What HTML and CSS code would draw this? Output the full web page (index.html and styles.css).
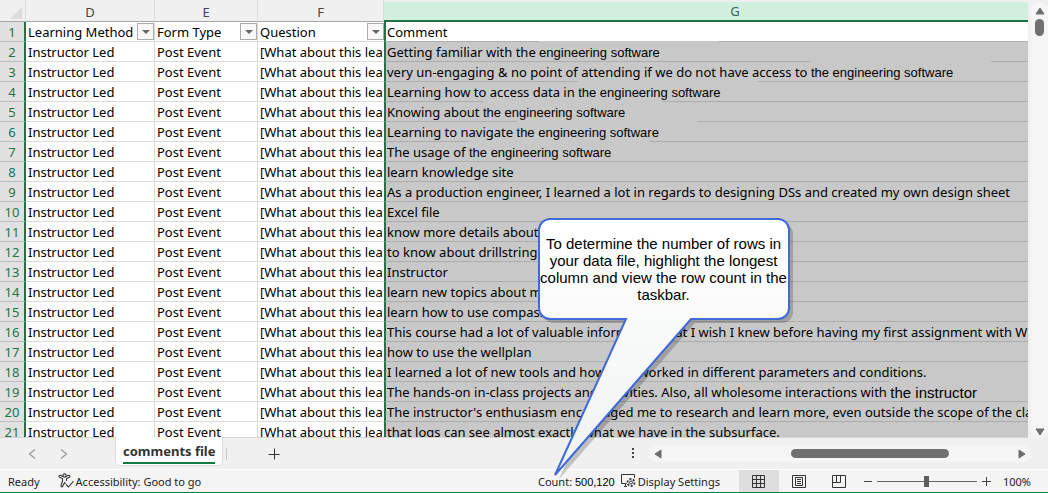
FILE: index.html
```html
<!DOCTYPE html>
<html lang="en">
<head>
    <meta charset="UTF-8">
    <meta name="viewport" content="width=device-width, initial-scale=1.0">
    <title>comments file</title>
    <link rel="stylesheet" href="styles.css">
</head>
<body>
    <div class="workspace">
        <div class="sheet">
            <table class="grid">
                <colgroup>
                    <col class="col-num">
                    <col class="col-d">
                    <col class="col-e">
                    <col class="col-f">
                    <col class="col-g">
                </colgroup>
                <thead>
                    <tr>
                        <th class="corner"><svg width="12" height="12" viewBox="0 0 12 12"><path d="M12 0V12H0z" fill="#dcdcdc"/></svg></th>
                        <th>D</th>
                        <th>E</th>
                        <th>F</th>
                        <th class="selected">G</th>
                    </tr>
                </thead>
                <tbody>
                    <tr class="titles">
                        <th>1</th>
                        <td><div class="title">Learning Method<button class="filter" aria-label="Filter Learning Method"></button></div></td>
                        <td><div class="title">Form Type<button class="filter" aria-label="Filter Form Type"></button></div></td>
                        <td><div class="title">Question<button class="filter" aria-label="Filter Question"></button></div></td>
                        <td>Comment</td>
                    </tr>
                    <tr><th>2</th><td>Instructor Led</td><td>Post Event</td><td>[What about this lea</td><td>Getting familiar with the <span class="patch">engineering software</span></td></tr>
                    <tr><th>3</th><td>Instructor Led</td><td>Post Event</td><td>[What about this lea</td><td>very un-engaging &amp; no point of attending if we do not have access to <span class="patch">the engineering software</span></td></tr>
                    <tr><th>4</th><td>Instructor Led</td><td>Post Event</td><td>[What about this lea</td><td>Learning how to access data in <span class="patch">the engineering software</span></td></tr>
                    <tr><th>5</th><td>Instructor Led</td><td>Post Event</td><td>[What about this lea</td><td>Knowing about <span class="patch">the engineering software</span></td></tr>
                    <tr><th>6</th><td>Instructor Led</td><td>Post Event</td><td>[What about this lea</td><td>Learning to navigate <span class="patch">the engineering software</span></td></tr>
                    <tr><th>7</th><td>Instructor Led</td><td>Post Event</td><td>[What about this lea</td><td>The usage of <span class="patch">the engineering software</span></td></tr>
                    <tr><th>8</th><td>Instructor Led</td><td>Post Event</td><td>[What about this lea</td><td>learn knowledge site</td></tr>
                    <tr><th>9</th><td>Instructor Led</td><td>Post Event</td><td>[What about this lea</td><td>As a production engineer, I learned a lot in regards to designing DSs and created my own design sheet</td></tr>
                    <tr><th>10</th><td>Instructor Led</td><td>Post Event</td><td>[What about this lea</td><td>Excel file</td></tr>
                    <tr><th>11</th><td>Instructor Led</td><td>Post Event</td><td>[What about this lea</td><td>know more details about</td></tr>
                    <tr><th>12</th><td>Instructor Led</td><td>Post Event</td><td>[What about this lea</td><td>to know about drillstring</td></tr>
                    <tr><th>13</th><td>Instructor Led</td><td>Post Event</td><td>[What about this lea</td><td>Instructor</td></tr>
                    <tr><th>14</th><td>Instructor Led</td><td>Post Event</td><td>[What about this lea</td><td>learn new topics about m</td></tr>
                    <tr><th>15</th><td>Instructor Led</td><td>Post Event</td><td>[What about this lea</td><td>learn how to use compass</td></tr>
                    <tr><th>16</th><td>Instructor Led</td><td>Post Event</td><td>[What about this lea</td><td>This course had a lot of valuable information that I wish I knew before having my first assignment with W</td></tr>
                    <tr><th>17</th><td>Instructor Led</td><td>Post Event</td><td>[What about this lea</td><td>how to use the wellplan</td></tr>
                    <tr><th>18</th><td>Instructor Led</td><td>Post Event</td><td>[What about this lea</td><td>I learned a lot of new tools and how they worked in different parameters and conditions.</td></tr>
                    <tr><th>19</th><td>Instructor Led</td><td>Post Event</td><td>[What about this lea</td><td>The hands-on in-class projects and activities. Also, all wholesome interactions with <span class="patch large">the instructor</span></td></tr>
                    <tr><th>20</th><td>Instructor Led</td><td>Post Event</td><td>[What about this lea</td><td>The instructor's enthusiasm encouraged me to research and learn more, even outside the scope of the class</td></tr>
                    <tr><th>21</th><td>Instructor Led</td><td>Post Event</td><td>[What about this lea</td><td>that logs can see almost exactly what we have in the subsurface.</td></tr>
                </tbody>
            </table>
        </div>
        <div class="vscroll">
            <svg width="10" height="8" viewBox="0 0 10 8"><path d="M5 1L9 7H1z" fill="#6e6e6e" stroke="#6e6e6e" stroke-linejoin="round"/></svg>
            <div class="vthumb"></div>
            <svg class="down" width="10" height="8" viewBox="0 0 10 8"><path d="M5 7L9 1H1z" fill="#6e6e6e" stroke="#6e6e6e" stroke-linejoin="round"/></svg>
        </div>
    </div>

    <div class="tabbar">
        <button class="nav" aria-label="Previous sheet"><svg width="8" height="12" viewBox="0 0 8 12"><path d="M7 1.500L1.500 6L7 10.500" fill="none" stroke="#999" stroke-width="1.300"/></svg></button>
        <button class="nav" aria-label="Next sheet"><svg width="8" height="12" viewBox="0 0 8 12"><path d="M1 1.500L6.500 6L1 10.500" fill="none" stroke="#999" stroke-width="1.300"/></svg></button>
        <button class="tab"><span>comments file</span></button>
        <button class="add" aria-label="New sheet"><svg width="12" height="12" viewBox="0 0 12 12"><path d="M6.500 0.500V11.500M0.500 6.500H11.500" stroke="#333"/></svg></button>
        <svg class="dots" width="3" height="12" viewBox="0 0 3 12"><path d="M0 0h2v2H0zM0 4h2v2H0zM0 8h2v2H0z" fill="#444"/></svg>
        <div class="hscroll">
            <svg width="8" height="10" viewBox="0 0 8 10"><path d="M1 5L7 1V9z" fill="#6e6e6e" stroke="#6e6e6e" stroke-linejoin="round"/></svg>
            <div class="hthumb"></div>
            <svg width="8" height="10" viewBox="0 0 8 10"><path d="M7 5L1 1V9z" fill="#6e6e6e" stroke="#6e6e6e" stroke-linejoin="round"/></svg>
        </div>
    </div>

    <div class="statusbar">
        <span class="ready">Ready</span>
        <button class="status-item access">
            <svg width="16" height="16" viewBox="0 0 16 16" fill="none" stroke="#333" stroke-width="1.100"><circle cx="6.500" cy="2.500" r="1.600"/><path d="M5 3.500L2.500 2.300C1 1.800 0.500 3.600 1.700 4.200L4.500 5.500V8L3 12.500C2.700 14 4.300 14.300 4.700 13.200L6.500 9.500L7.500 11M8 3.500L10.500 2.300C12 1.800 12.500 3.600 11.300 4.200L8.500 5.500V8M8 11.500L10.500 14L15.500 8"/></svg>
            Accessibility: Good to go
        </button>
        <span class="count">Count: <span class="total">500,120</span></span>
        <button class="status-item display">
            <svg width="15" height="14" viewBox="0 0 15 14" fill="none" stroke="#333"><path d="M5.500 9.500H0.500V0.500H13.500V4M3 12.500H6M4.500 9.500V12.500"/><circle cx="10" cy="8.500" r="1.500"/><circle cx="10" cy="8.500" r="3.500" stroke-width="1.800" stroke-dasharray="2 1.600"/></svg>
            Display Settings
        </button>
        <button class="view active" aria-label="Normal view"><svg width="13" height="13" viewBox="0 0 13 13"><path d="M0.500 0.500H12.500V12.500H0.500zM4.500 0.500V12.500M8.500 0.500V12.500M0.500 4.500H12.500M0.500 8.500H12.500" fill="none" stroke="#333"/></svg></button>
        <button class="view" aria-label="Page layout"><svg width="14" height="13" viewBox="0 0 14 13"><path d="M0.500 0.500H13.500V12.500H0.500zM3.500 2.500H10.500V10.500H3.500zM5 4.500H9M5 6.500H9M5 8.500H9" fill="none" stroke="#333"/></svg></button>
        <button class="view" aria-label="Page break preview"><svg width="14" height="13" viewBox="0 0 14 13"><path d="M0.500 0.500H13.500V12.500H0.500zM4.500 0.500V7.500M0.500 7.500H8.500V0.500" fill="none" stroke="#333"/></svg></button>
        <button class="zoom-btn" aria-label="Zoom out"><svg width="8" height="9" viewBox="0 0 8 9"><path d="M0 4.500H8" stroke="#444"/></svg></button>
        <input class="zoom" type="range" min="0" max="100" value="50" aria-label="Zoom">
        <button class="zoom-btn" aria-label="Zoom in"><svg width="9" height="9" viewBox="0 0 9 9"><path d="M0 4.500H9M4.500 0V9" stroke="#444"/></svg></button>
        <span class="percent">100%</span>
    </div>

    <div class="callout">
        <svg width="260" height="264" viewBox="0 0 260 264">
            <path d="M13 2H241A11 11 0 0 1 252 13V91A11 11 0 0 1 241 102H154L18 258L89 102H13A11 11 0 0 1 2 91V13A11 11 0 0 1 13 2z" fill="#000" fill-opacity="0.200" transform="translate(4 3)"/>
            <path d="M13 1H241A11 11 0 0 1 252 12V90A11 11 0 0 1 241 101H154L18 257L89 101H13A11 11 0 0 1 2 90V12A11 11 0 0 1 13 1z" fill="url(#paper)" stroke="#4169d8" stroke-width="2"/>
            <defs><linearGradient id="paper" x1="0" y1="0" x2="0" y2="1"><stop offset="0" stop-color="#fff"/><stop offset="1" stop-color="#f0f2f2"/></linearGradient></defs>
        </svg>
        <p>To determine the number of rows in your data file, highlight the longest column and view the row count in the taskbar.</p>
    </div>
</body>
</html>
```
FILE: styles.css
```css
* {
    box-sizing: border-box;
}
body {
    margin: 0;
    height: 100vh;
    display: flex;
    flex-direction: column;
    overflow: hidden;
    background-color: #f0f0f0;
    font-family: "Noto Sans", sans-serif;
    font-size: 13px;
    color: #000;
    position: relative;
}
button {
    padding: 0;
    border: none;
    background: none;
    font: inherit;
    color: inherit;
}
svg {
    display: block;
    flex: none;
}

/* grid */
.workspace {
    flex: 1;
    min-height: 0;
    display: flex;
}
.sheet {
    flex: 1;
    min-width: 0;
    overflow: hidden;
    border-bottom: 1px solid #d4d4d4;
}
.grid {
    table-layout: fixed;
    width: calc(100% + 59px);
    border-spacing: 0;
    background-color: #fff;
}
.col-num {
    width: 26px;
}
.col-d {
    width: 129px;
}
.col-e {
    width: 103px;
}
.col-f {
    width: 126px;
}
.grid th {
    font-weight: normal;
    padding: 2px 0 0;
    height: 20px;
    line-height: 17px;
}
.grid thead th {
    height: 22px;
    padding-top: 4px;
    background-color: #f0f0f0;
    border-right: 1px solid #dcdcdc;
    border-bottom: 1px solid #a6a6a6;
    color: #444;
}
.grid thead .corner svg {
    margin-left: 10px;
}
.grid thead .selected {
    background-color: #d2f0e0;
    border-top: 2px solid #f0f0f0;
    border-bottom: 2px solid #217346;
    padding-top: 1px;
    color: #2f6b4c;
}
.grid tbody th {
    background-color: #e1e1e1;
    border-right: 2px solid #217346;
    border-bottom: 1px solid #bcbcbc;
    color: #217346;
}
.grid td {
    height: 20px;
    line-height: 17px;
    padding: 2px 0 0 2px;
    border-right: 1px solid #dcdcdc;
    border-bottom: 1px solid #dcdcdc;
    white-space: nowrap;
    overflow: hidden;
}
.grid td:nth-child(4) {
    border-right: none;
}
.grid td:last-child {
    background-color: #c8c8c8;
    border-left: 2px solid #217346;
    border-bottom-color: #adadad;
    padding-left: 1px;
    overflow: visible;
}
.grid .titles td:last-child {
    background-color: #fff;
}
.title {
    display: flex;
    justify-content: space-between;
    height: 17px;
}
.filter {
    width: 17px;
    height: 17px;
    margin-top: -1px;
    border: 1px solid #ababab;
    background-color: #f8f8f8;
    display: flex;
    align-items: center;
    justify-content: center;
}
.filter::after {
    content: "";
    border: 4px solid transparent;
    border-top-color: #666;
    border-bottom: none;
}
.patch {
    display: inline-block;
    width: 180px;
    height: 20px;
    margin-top: -3px;
    vertical-align: top;
    line-height: 23px;
    background-color: #c8c8c8;
    font-family: "Liberation Sans", Arial, sans-serif;
}
.large {
    font-size: 15px;
}

/* scrollbars */
.vscroll {
    width: 17px;
    margin: 2px 0 0 3px;
    padding: 5px 0 2px;
    display: flex;
    flex-direction: column;
    align-items: center;
    background-color: #f5f5f5;
    border-radius: 8px;
}
.vthumb {
    width: 9px;
    height: 17px;
    margin-top: 4px;
    border-radius: 5px;
    background-color: #707070;
}
.down {
    margin-top: auto;
}
.hscroll {
    width: 382px;
    height: 17px;
    margin: 0 17px 0 14px;
    padding: 0 5px;
    display: flex;
    align-items: center;
    justify-content: space-between;
    background-color: #f5f5f5;
    border-radius: 8px;
}
.hthumb {
    width: 158px;
    height: 9px;
    margin-left: 60px;
    border-radius: 5px;
    background-color: #707070;
}

/* sheet tabs */
.tabbar {
    height: 32px;
    display: flex;
    align-items: center;
    border-bottom: 1px solid #fff;
}
.nav {
    margin-left: 28px;
}
.nav + .nav {
    margin-left: 24px;
}
.tab {
    align-self: flex-start;
    height: 29px;
    margin: -1px 0 0 47px;
    padding: 3px 7px 0;
    background-color: #fff;
    border: 1px solid #dcdcdc;
    border-top: none;
    border-radius: 0 0 5px 5px;
    font-weight: bold;
    color: #333;
    z-index: 1;
}
.tab span {
    display: block;
    height: 22px;
    border-bottom: 2px solid #107c41;
}
.add {
    padding-left: 41px;
    border-left: 1px solid #c8c8c8;
    margin-left: 3px;
}
.dots {
    margin-left: auto;
}

/* status bar */
.statusbar {
    height: 23px;
    display: flex;
    align-items: center;
    background-color: #f4f4f4;
    border-bottom: 1px solid #107c41;
    font-size: 11px;
    color: #222;
}
.ready {
    margin-left: 8px;
}
.status-item {
    display: flex;
    align-items: center;
    gap: 2px;
}
.access {
    margin-left: 18px;
}
.count {
    margin-left: auto;
}
.total {
    font-family: "Liberation Sans", Arial, sans-serif;
    color: #000;
}
.display {
    margin: 0 19px 0 6px;
}
.view {
    width: 40px;
    height: 22px;
    display: flex;
    align-items: center;
    justify-content: center;
}
.active {
    background-color: #dedede;
}
.zoom-btn {
    margin-left: 5px;
}
.zoom {
    appearance: none;
    width: 100px;
    height: 11px;
    margin: 0 0 0 5px;
    background: linear-gradient(#666, #666) center / 100% 1px no-repeat;
}
.zoom::-webkit-slider-thumb {
    appearance: none;
    width: 5px;
    height: 11px;
    background-color: #605e5c;
}
.percent {
    margin: 0 17px 0 12px;
}

/* note pointing at the row count */
.callout {
    position: absolute;
    left: 537px;
    bottom: 11px;
}
.callout p {
    position: absolute;
    top: 17px;
    left: 2px;
    width: 249px;
    margin: 0;
    font: 15px/17px "Liberation Sans", Arial, sans-serif;
    text-align: center;
}
```
